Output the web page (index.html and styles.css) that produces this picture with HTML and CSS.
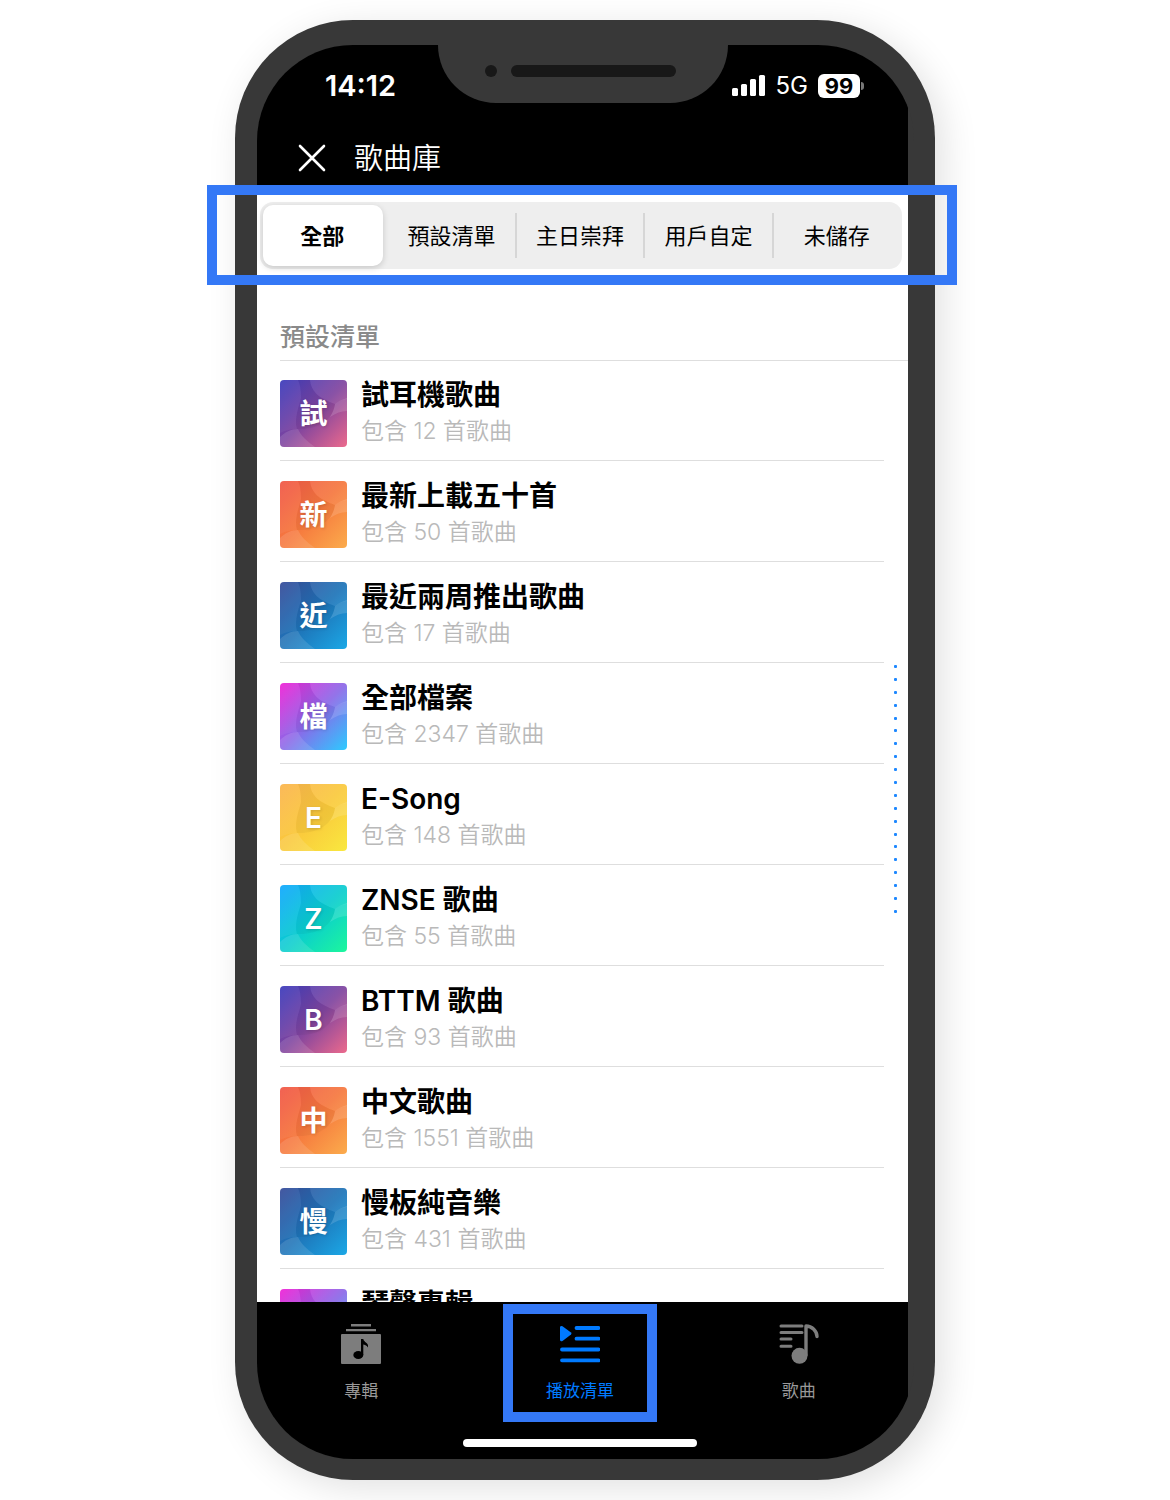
FILE: index.html
```html
<!DOCTYPE html>
<html lang="zh-Hant">
<head>
<meta charset="utf-8">
<meta name="viewport" content="width=device-width, initial-scale=1">
<title>歌曲庫</title>
<link rel="stylesheet" href="styles.css">
</head>
<body>
<svg class="defs" aria-hidden="true">
  <symbol id="waves" viewBox="0 0 67 67">
    <path fill="#000" fill-opacity=".04" d="M18 0H30C31 11 38 18 55 24C53 40 38 50 17 49C14 38 19 27 21 18C21 10 20 4 18 0Z"/>
    <path fill="#fff" fill-opacity=".08" d="M30 0H67V19C61 20 57 22 55 24C38 18 31 11 30 0Z"/>
    <path fill="#fff" fill-opacity=".14" d="M67 18C61 20 57 22 55 24C54 29 53 32 50 37C56 33 61 31 67 31Z"/>
    <path fill="#fff" fill-opacity=".05" d="M0 0H18C20 4 21 10 21 18C19 27 14 38 17 49C10 49 4 51 0 53Z"/>
    <path fill="#fff" fill-opacity=".12" d="M0 57C5 52 11 49 18 49C21 56 27 61 35 67H0Z"/>
  </symbol>
</svg>
<div class="phone">
  <div class="screen">
    <header class="top">
      <div class="status">
        <time class="clock">14:12</time>
        <div class="signals">
          <svg width="34" height="22" viewBox="0 0 34 22" fill="#fff" aria-hidden="true"><rect x="0" y="13" width="6" height="8" rx="1.500"/><rect x="9" y="9" width="6" height="12" rx="1.500"/><rect x="18" y="4" width="6" height="17" rx="1.500"/><rect x="27" y="0" width="6" height="21" rx="1.500"/></svg>
          <span class="network">5G</span>
          <span class="battery">99</span>
        </div>
      </div>
      <div class="appbar">
        <button class="close" type="button" aria-label="關閉"><svg width="28" height="28" viewBox="0 0 28 28" aria-hidden="true"><path d="M2 2L26 26M26 2L2 26" stroke="#fff" stroke-width="2.600" stroke-linecap="round"/></svg></button>
        <h1>歌曲庫</h1>
      </div>
    </header>
    <main class="library">
      <div class="segments" role="tablist">
        <button type="button" role="tab" aria-selected="true" class="segment selected">全部</button>
        <button type="button" role="tab" aria-selected="false" class="segment">預設清單</button>
        <button type="button" role="tab" aria-selected="false" class="segment divided">主日崇拜</button>
        <button type="button" role="tab" aria-selected="false" class="segment divided">用戶自定</button>
        <button type="button" role="tab" aria-selected="false" class="segment divided">未儲存</button>
      </div>
      <h2>預設清單</h2>
      <ul class="playlists">
        <li><a href="#p1"><span class="cover violet"><svg><use href="#waves"/></svg><b>試</b></span><span class="info"><strong>試耳機歌曲</strong><small>包含 12 首歌曲</small></span></a></li>
        <li><a href="#p2"><span class="cover orange"><svg><use href="#waves"/></svg><b>新</b></span><span class="info"><strong>最新上載五十首</strong><small>包含 50 首歌曲</small></span></a></li>
        <li><a href="#p3"><span class="cover blue"><svg><use href="#waves"/></svg><b>近</b></span><span class="info"><strong>最近兩周推出歌曲</strong><small>包含 17 首歌曲</small></span></a></li>
        <li><a href="#p4"><span class="cover magenta"><svg><use href="#waves"/></svg><b>檔</b></span><span class="info"><strong>全部檔案</strong><small>包含 2347 首歌曲</small></span></a></li>
        <li><a href="#p5"><span class="cover yellow"><svg><use href="#waves"/></svg><b>E</b></span><span class="info"><strong>E-Song</strong><small>包含 148 首歌曲</small></span></a></li>
        <li><a href="#p6"><span class="cover aqua"><svg><use href="#waves"/></svg><b>Z</b></span><span class="info"><strong>ZNSE 歌曲</strong><small>包含 55 首歌曲</small></span></a></li>
        <li><a href="#p7"><span class="cover violet"><svg><use href="#waves"/></svg><b>B</b></span><span class="info"><strong>BTTM 歌曲</strong><small>包含 93 首歌曲</small></span></a></li>
        <li><a href="#p8"><span class="cover orange"><svg><use href="#waves"/></svg><b>中</b></span><span class="info"><strong>中文歌曲</strong><small>包含 1551 首歌曲</small></span></a></li>
        <li><a href="#p9"><span class="cover blue"><svg><use href="#waves"/></svg><b>慢</b></span><span class="info"><strong>慢板純音樂</strong><small>包含 431 首歌曲</small></span></a></li>
        <li><a href="#p10"><span class="cover magenta"><svg><use href="#waves"/></svg></span><span class="info"><strong>琴聲專輯</strong></span></a></li>
      </ul>
      <div class="index" aria-hidden="true"><i></i><i></i><i></i><i></i><i></i><i></i><i></i><i></i><i></i><i></i><i></i><i></i><i></i><i></i><i></i><i></i><i></i><i></i><i></i><i></i></div>
    </main>
    <footer class="bottom">
      <nav class="tabs">
        <a href="#albums"><svg width="40" height="40" viewBox="0 0 40 40" aria-hidden="true"><path fill="currentColor" d="M10 0H30V2.500H10ZM5 5H35V7.200H5ZM1 10H39Q40 10 40 11V39Q40 40 39 40H1Q0 40 0 39V11Q0 10 1 10Z"/><ellipse cx="17.300" cy="31" rx="5" ry="4"/><path d="M20 15H22.300C22.800 18.500 28 18.500 27 23.500C25.500 21 23.500 20.800 22.300 20.500V31H20Z"/></svg><span>專輯</span></a>
        <a href="#playlists" class="active" aria-current="page"><svg width="40" height="40" viewBox="0 0 40 40" aria-hidden="true"><path stroke="currentColor" stroke-width="3.800" stroke-linecap="round" d="M16.500 4H38.500M16.500 14.700H38.500M2 25.500H38.500M2 36.300H38.500"/><path fill="currentColor" d="M0 3Q.5 1.500 2.500 2.300L11 8.500Q12 9.500 11 10.500L2.500 17Q.5 18 0 16Z"/></svg><span>播放清單</span></a>
        <a href="#songs"><svg width="40" height="40" viewBox="0 0 40 40" fill="none" aria-hidden="true"><path stroke="currentColor" stroke-width="3" stroke-linecap="round" d="M2 2H23M2 8.500H23M2 15H12M2 22.300H12"/><circle cx="20.500" cy="31.800" r="8" fill="currentColor"/><path stroke="currentColor" stroke-width="3.400" stroke-linecap="round" stroke-linejoin="round" d="M27 31V2C33 2 38 7 38 12.500"/></svg><span>歌曲</span></a>
      </nav>
      <div class="home"></div>
    </footer>
  </div>
  <div class="notch"><i class="camera"></i><i class="speaker"></i></div>
  <div class="highlight"></div>
</div>
</body>
</html>
```
FILE: styles.css
```css
*, *::before, *::after { box-sizing: border-box; }
body {
  margin: 0;
  padding: 20px 0;
  background: #fff;
  font-family: Inter, "Noto Sans CJK TC", sans-serif;
  overflow: hidden;
}
button, a { color: inherit; font: inherit; text-decoration: none; }
button { margin: 0; padding: 0; border: 0; background: none; }
svg { display: block; }
.defs { position: absolute; width: 0; height: 0; }

.phone {
  position: relative;
  width: 100%;
  max-width: 700px;
  height: calc(100vh - 40px);
  margin: 0 auto;
  padding: 25px 21px 21px 22px;
  border-radius: 118px;
  background: #383838;
  box-shadow: 8px 8px 36px rgba(0, 0, 0, .12);
}
.screen {
  display: flex;
  flex-direction: column;
  height: 100%;
  padding-right: 6px;
  border-radius: 96px;
  background: #383838;
  overflow: hidden;
}
.notch {
  position: absolute;
  top: 25px;
  left: 203px;
  display: flex;
  gap: 14px;
  width: 290px;
  height: 58px;
  padding: 20px 0 0 47px;
  border-radius: 0 0 58px 58px;
  background: #383838;
}
.camera, .speaker { width: 12px; height: 12px; border-radius: 6px; background: #181818; }
.speaker { width: 165px; }
.highlight {
  position: absolute;
  top: 165px;
  left: -28px;
  right: -22px;
  height: 100px;
  border: 10px solid #3478f6;
}

.top { background: #000; color: #fff; }
.status {
  display: flex;
  justify-content: space-between;
  height: 75px;
  padding: 27px 48px 0 68px;
  line-height: 28px;
}
.clock { font-size: 29px; font-weight: 600; }
.signals { display: flex; align-items: center; gap: 10px; height: 28px; }
.network { font-size: 24px; }
.battery {
  position: relative;
  width: 42px;
  border-radius: 6px;
  background: #fff;
  color: #000;
  font-size: 22px;
  font-weight: 700;
  line-height: 24px;
  text-align: center;
}
.battery::after {
  content: "";
  position: absolute;
  top: 8px;
  left: 43px;
  width: 3px;
  height: 8px;
  border-radius: 0 4px 4px 0;
  background: #777;
}
.appbar { display: flex; align-items: center; gap: 28px; height: 75px; padding-left: 41px; }
h1 { margin: 0; padding-top: 3px; font-size: 29px; font-weight: 350; line-height: 32px; }

.library {
  position: relative;
  flex: 1;
  min-height: 0;
  background: #fff;
  overflow: hidden;
}
.segments {
  display: grid;
  grid-template-columns: repeat(5, 1fr);
  height: 67px;
  margin: 7px 6px 0 3px;
  border-radius: 13px;
  background: #eee;
}
.segment { position: relative; padding-right: 2px; font-size: 22px; line-height: 28px; }
.selected {
  margin: 3px 5px 3px 3px;
  border-radius: 10px;
  background: #fff;
  box-shadow: 0 2px 6px rgba(0, 0, 0, .16);
  font-weight: 600;
}
.divided::before {
  content: "";
  position: absolute;
  top: 11px;
  bottom: 11px;
  left: -2px;
  width: 2px;
  background: #d6d6d6;
}
h2 {
  margin: 55px 0 0 23px;
  padding-bottom: 10px;
  border-bottom: 1px solid #dedede;
  color: #8a8a8a;
  font-size: 25px;
  font-weight: 500;
  line-height: 26px;
}
.playlists { margin: 0 24px 0 23px; padding: 0; list-style: none; }
.playlists a {
  display: flex;
  gap: 14px;
  padding: 20px 0 13px;
  border-bottom: 1px solid #dedede;
}
.playlists li:first-child a { padding-top: 19px; }
.cover {
  display: grid;
  flex: none;
  width: 67px;
  height: 67px;
  border-radius: 4px;
  overflow: hidden;
  color: #fff;
}
.cover svg, .cover b { grid-area: 1 / 1; }
.cover svg { width: 67px; height: 67px; }
.cover b {
  place-self: center;
  font-size: 28px;
  font-weight: 600;
  line-height: 32px;
  text-shadow: 1px 1px 3px rgba(0, 0, 0, .14);
}
.violet { background: linear-gradient(135deg, #3f3fbd, #7f449f 50%, #ec6a8c); }
.orange { background: linear-gradient(135deg, #f1594a, #f6793e 50%, #fbac4c); }
.blue { background: linear-gradient(135deg, #3a4f9c, #1e74b8 50%, #1ba8e6); }
.magenta { background: linear-gradient(135deg, #f026d8, #8b68e8 50%, #2ccbff); }
.yellow { background: linear-gradient(135deg, #fbb651, #fac93c 50%, #f9e83f); }
.aqua { background: linear-gradient(135deg, #16a9ff, #0accd0 50%, #1df79c); }
.info { display: flex; flex-direction: column; gap: 6px; white-space: nowrap; }
.info strong { font-size: 28px; font-weight: 600; line-height: 30px; }
.info small { color: #b9b9b9; font-size: 23px; font-weight: 350; line-height: 30px; }
.index {
  position: absolute;
  top: 470px;
  right: 11px;
  display: flex;
  flex-direction: column;
  justify-content: space-between;
  height: 248px;
}
.index i { width: 3px; height: 3px; border-radius: 1px; background: #1e88ff; }

.bottom { height: 157px; margin-left: -5px; background: #000; }
.tabs {
  display: grid;
  grid-template-columns: repeat(3, 1fr);
  color: #7d7d7d;
}
.tabs a {
  position: relative;
  display: flex;
  flex-direction: column;
  align-items: center;
  gap: 15px;
  height: 137px;
  padding-top: 22px;
  font-size: 17px;
  line-height: 24px;
}
.tabs span { color: #999; }
.tabs .active, .tabs .active span { color: #007aff; }
.active::after {
  content: "";
  position: absolute;
  inset: 2px 32px auto;
  height: 118px;
  border: 10px solid #3478f6;
}
.home { width: 234px; height: 8px; margin: 0 auto; border-radius: 4px; background: #fff; }
```
